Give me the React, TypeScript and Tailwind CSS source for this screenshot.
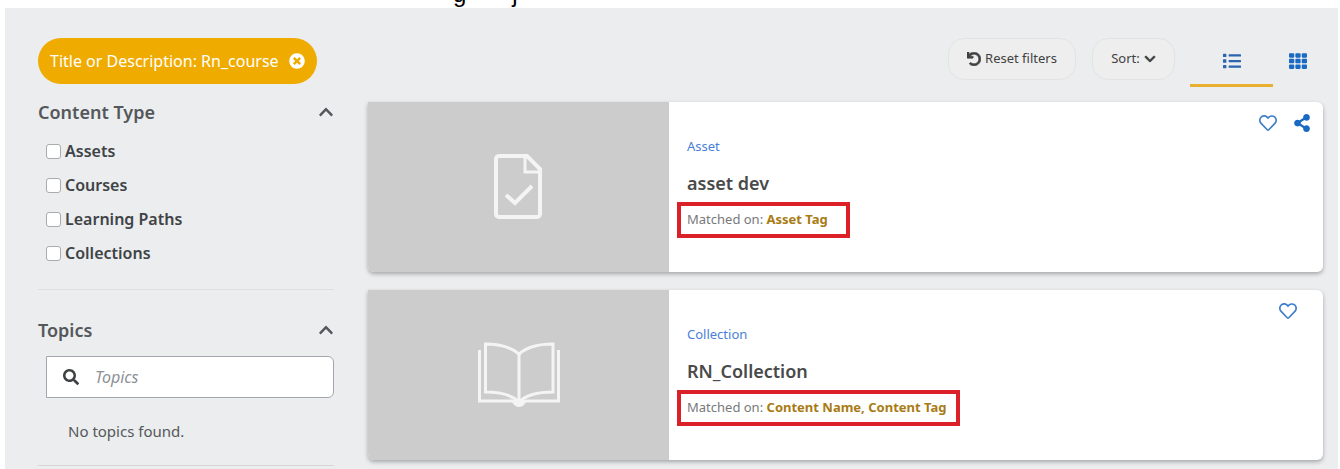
import React, { useState } from 'react';
import {
  FaChevronDown,
  FaChevronUp,
  FaList,
  FaRegHeart,
  FaSearch,
  FaShareAlt,
  FaTh,
  FaTimesCircle,
  FaUndo,
} from 'react-icons/fa';

interface CatalogItem {
  kind: string;
  title: string;
  matchedOn: string;
  shareable: boolean;
  Icon: React.FC;
}

const DocumentIcon: React.FC = () => (
  <svg width="50" height="66" viewBox="0 0 50 66" fill="none" stroke="#f4f4f4" strokeWidth="4" aria-hidden="true">
    <path d="M5 2H33L46 15V60a3 3 0 0 1-3 3H5a3 3 0 0 1-3-3V5a3 3 0 0 1 3-3Z" />
    <path d="M31 2V18H46" strokeWidth="3" />
    <path d="M12 41L21 49L38 32" />
  </svg>
);

const BookIcon: React.FC = () => (
  <svg width="84" height="66" viewBox="0 0 84 66" fill="none" stroke="#f4f4f4" strokeWidth="3" aria-hidden="true">
    <path d="M42 12C34 5 22 2 8.500 2V50C22 50 34 52 42 60C50 52 62 50 76 50V2C62 2 50 5 42 12Z" />
    <path d="M42 12V60" />
    <path d="M2.500 8V59H36M81.500 8V59H48" />
    <path d="M35 58H49A7 7 0 0 1 35 58Z" fill="#f4f4f4" stroke="none" />
  </svg>
);

const contentTypes = ['Assets', 'Courses', 'Learning Paths', 'Collections'];

const items: CatalogItem[] = [
  { kind: 'Asset', title: 'asset dev', matchedOn: 'Asset Tag', shareable: true, Icon: DocumentIcon },
  { kind: 'Collection', title: 'RN_Collection', matchedOn: 'Content Name, Content Tag', shareable: false, Icon: BookIcon },
];

const FilterHeading: React.FC<{ title: string; open: boolean; onToggle: () => void }> = ({ title, open, onToggle }) => (
  <button type="button" aria-expanded={open} onClick={onToggle} className="flex h-5 w-full items-center justify-between text-lg font-semibold text-[#55585b]">
    {title}
    {open ? <FaChevronUp className="size-4" /> : <FaChevronDown className="size-4" />}
  </button>
);

const CatalogCard: React.FC<{ item: CatalogItem }> = ({ item }) => {
  const { Icon } = item;
  return (
    <article className="flex h-[170px] rounded-md rounded-tl-none bg-white shadow-[0_2px_4px_rgba(0,0,0,0.3)]">
      <div className="flex w-[301px] shrink-0 items-center justify-center rounded-bl-md bg-[#cccccc]">
        <Icon />
      </div>
      <div className="flex-1 pt-[34px] pl-2">
        <a href="#" className="block pl-[10px] text-[13px] leading-5 text-[#4a80d8]">{item.kind}</a>
        <h3 className="mt-[15px] pl-[10px] text-lg leading-6 font-semibold text-[#4a4a4a]">{item.title}</h3>
        <p className={`mt-[7px] flex h-9 w-fit items-center border-4 border-[#dc2028] pl-[6px] text-[13px] whitespace-pre text-[#77797b] ${item.shareable ? 'pr-[18px]' : 'pr-[10px]'}`}>
          Matched on: <strong className="font-bold text-[#a87b14]">{item.matchedOn}</strong>
        </p>
      </div>
      <div className={`flex items-start gap-4 pt-3 ${item.shareable ? 'pr-3' : 'pr-[26px]'}`}>
        <button type="button" aria-label="Add to favorites" className="text-[#3f7fc9]">
          <FaRegHeart className="size-[18px]" />
        </button>
        {item.shareable && (
          <button type="button" aria-label="Share" className="text-[#1a6ac4]">
            <FaShareAlt className="size-[18px]" />
          </button>
        )}
      </div>
    </article>
  );
};

export default function App() {
  const [typesOpen, setTypesOpen] = useState(true);
  const [topicsOpen, setTopicsOpen] = useState(true);
  const [query, setQuery] = useState('');

  return (
    <div className="bg-white font-['Noto_Sans',sans-serif]">
      {/* tail of the line above the panel */}
      <div className="flex h-2 items-end gap-[46px] overflow-hidden pl-[453px] font-['Liberation_Sans',sans-serif] text-2xl leading-7 text-black">
        <span>g</span>
        <span>j</span>
      </div>

      <main className="mr-[2px] ml-[5px] bg-[#ebedee] pt-[30px] pr-[15px] pb-[3px] pl-[33px]">
        <header className="flex h-[49px] items-start">
          <div className="flex h-[46px] items-center gap-[10px] rounded-full bg-[#f0ab00] px-3 text-base text-white">
            Title or Description: Rn_course
            <button type="button" aria-label="Remove filter">
              <FaTimesCircle className="size-4" />
            </button>
          </div>
          <div className="ml-auto flex items-start text-[13px] text-[#3f4142]">
            <button type="button" className="flex h-[42px] w-[128px] items-center justify-center gap-1 rounded-2xl border border-[#e2e3e4] bg-[#eeeeee]">
              <FaUndo className="size-[14px]" stroke="currentColor" strokeWidth="24" />
              Reset filters
            </button>
            <button type="button" className="ml-4 flex h-[42px] w-[83px] items-center justify-center gap-1 rounded-2xl border border-[#e2e3e4] bg-[#eeeeee]">
              Sort:
              <FaChevronDown className="size-3" stroke="currentColor" strokeWidth="24" />
            </button>
            <button type="button" aria-label="List view" className="ml-[15px] flex h-[49px] w-[83px] items-center justify-center border-b-3 border-[#e8b02e] text-[#2a66ad]">
              <FaList className="size-[18px]" />
            </button>
            <button type="button" aria-label="Grid view" className="flex h-[46px] w-[50px] items-center justify-center text-[#1a6ac4]">
              <FaTh className="size-[18px]" />
            </button>
          </div>
        </header>

        <div className="mt-[15px] flex items-start gap-[34px]">
          <aside className="w-[296px] shrink-0">
            <FilterHeading title="Content Type" open={typesOpen} onToggle={() => setTypesOpen(!typesOpen)} />
            {typesOpen && (
              <ul className="mt-3 pl-2">
                {contentTypes.map((type) => (
                  <li key={type}>
                    <label className="flex h-[34px] items-center gap-1 text-base font-semibold text-[#404346]">
                      <input type="checkbox" className="size-[15px] appearance-none rounded-[3px] border border-[#a9abad] bg-white checked:border-[#1a6ac4] checked:bg-[#1a6ac4]" />
                      {type}
                    </label>
                  </li>
                ))}
              </ul>
            )}
            <hr className="mt-[19px] mb-[30px] border-[#dcdedf]" />

            <FilterHeading title="Topics" open={topicsOpen} onToggle={() => setTopicsOpen(!topicsOpen)} />
            {topicsOpen && (
              <div className="pl-2">
                <label className="mt-4 flex h-[42px] items-center gap-4 rounded-r-md border border-[#a3a7ad] bg-white pl-4 text-[#3f4142]">
                  <FaSearch className="size-4 shrink-0" />
                  <input
                    type="text"
                    aria-label="Topics"
                    placeholder="Topics"
                    value={query}
                    onChange={(e) => setQuery(e.target.value)}
                    className="min-w-0 flex-1 text-base outline-none placeholder:text-[#8d9196] placeholder:italic"
                  />
                </label>
                <p className="mt-[23px] pl-[22px] text-[15px] leading-5 text-[#55585b]">No topics found.</p>
              </div>
            )}
            <hr className="mt-6 border-[#d3d5d6]" />
          </aside>

          <section className="flex min-w-0 flex-1 flex-col gap-[18px]">
            {items.map((item) => (
              <CatalogCard key={item.title} item={item} />
            ))}
          </section>
        </div>
      </main>
    </div>
  );
}
